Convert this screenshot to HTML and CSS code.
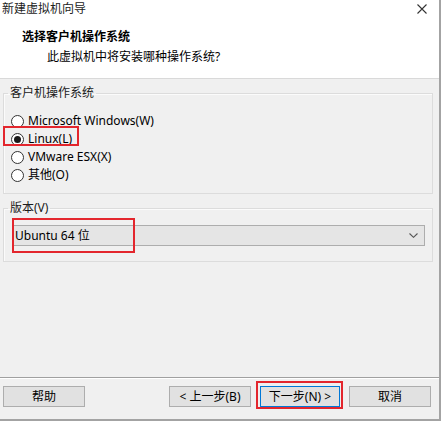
FILE: index.html
```html
<!DOCTYPE html>
<html lang="zh-CN">
<head>
    <meta charset="UTF-8">
    <title>新建虚拟机向导</title>
    <link rel="stylesheet" href="styles.css">
</head>
<body>
<div class="window">
    <div class="head">
        <div class="titlebar">
            <span class="title">新建虚拟机向导</span>
            <svg class="close" width="10" height="10" viewBox="0 0 10 10">
                <path d="M0.5 0.5 L9.5 9.5 M9.5 0.5 L0.5 9.5" stroke="#333" stroke-width="1.1" fill="none"/>
            </svg>
        </div>
        <div class="heading">选择客户机操作系统</div>
        <div class="subheading">此虚拟机中将安装哪种操作系统?</div>
    </div>

    <div class="content">
        <fieldset class="group osGroup">
            <legend>客户机操作系统</legend>
            <div class="radioRow"><span class="radio"></span>Microsoft Windows(W)</div>
            <div class="radioRow">
                <span class="radio checked"></span>Linux(L)
                <span class="mark markLinux"></span>
            </div>
            <div class="radioRow"><span class="radio"></span>VMware ESX(X)</div>
            <div class="radioRow"><span class="radio"></span>其他(O)</div>
        </fieldset>

        <fieldset class="group versionGroup">
            <legend>版本(V)</legend>
            <div class="select">
                <span>Ubuntu 64 位</span>
                <svg class="chevron" width="9" height="5" viewBox="0 0 9 5">
                    <path d="M0.5 0.5 L4.5 4.3 L8.5 0.5" stroke="#555" stroke-width="1.1" fill="none"/>
                </svg>
                <span class="mark markVersion"></span>
            </div>
        </fieldset>
    </div>

    <div class="footer">
        <button class="btn">帮助</button>
        <div class="navButtons">
            <button class="btn">&lt; 上一步(B)</button>
            <button class="btn btnDefault">下一步(N) &gt;<span class="mark markNext"></span></button>
            <button class="btn">取消</button>
        </div>
    </div>
</div>
</body>
</html>
```

FILE: styles.css
```css
html, body {
    margin: 0;
    background: #ffffff;
}

body {
    font-family: "Noto Sans", "Noto Sans CJK SC", sans-serif;
    font-size: 12px;
    color: #000;
}

.window {
    width: 439px;
    height: 419px;
    border-right: 2px solid #a3a3a3;
    border-bottom: 2px solid #a3a3a3;
    background: #f0f0f0;
    display: flex;
    flex-direction: column;
}

/* white header */
.head {
    background: #ffffff;
    height: 78px;
    border-bottom: 1px solid #d9d9d9;
}

.titlebar {
    height: 18px;
    display: flex;
    align-items: center;
    justify-content: space-between;
    padding: 0 12px 0 2px;
}
.title {
    line-height: 16px;
    color: #222;
}
.close {
    display: block;
    margin-top: -1px;
}

.heading {
    margin: 11px 0 0 22px;
    line-height: 16px;
    font-weight: bold;
}
.subheading {
    margin: 4px 0 0 47px;
    line-height: 16px;
}

.content {
    flex: 1;
    padding: 7px 0 0 3px;
}

.group {
    box-sizing: border-box;
    width: 430px;
    margin: 0;
    padding: 0;
    border: 1px solid #dcdcdc;
    box-shadow: inset 1px 1px 0 #fbfbfb;
}
.group legend {
    margin-left: 4px;
    padding: 0 2px;
    line-height: 14px;
    color: #1a1a1a;
}

.osGroup {
    padding: 12px 0 9px 0;
}

.versionGroup {
    margin-top: 7px;
    padding: 10px 7px 15px 8px;
}
.versionGroup legend {
    margin-left: -4px;
}

.radioRow {
    position: relative;
    height: 18px;
    line-height: 18px;
    display: flex;
    align-items: center;
    gap: 4px;
}
.radio {
    width: 11px;
    height: 11px;
    margin-left: 7px;
    border: 1px solid #333;
    border-radius: 50%;
    background: #fff;
    box-sizing: content-box;
    display: flex;
    align-items: center;
    justify-content: center;
}
.radio.checked::after {
    content: "";
    width: 7px;
    height: 7px;
    border-radius: 50%;
    background: #1a1a1a;
}

.select {
    position: relative;
    height: 19px;
    border: 1px solid #adadad;
    background: #e5e5e5;
    display: flex;
    align-items: center;
    justify-content: space-between;
    padding: 0 6px 0 2px;
    line-height: 19px;
}

/* red annotation frames drawn over the dialog */
.mark {
    position: absolute;
    border: 2px solid #e3262d;
    box-sizing: border-box;
    pointer-events: none;
}
.markLinux {
    left: -1px;
    top: -4px;
    width: 76px;
    height: 20px;
}
.markVersion {
    left: -1px;
    top: -8px;
    width: 123px;
    height: 35px;
}
.markNext {
    left: -5px;
    top: -6px;
    width: 87px;
    height: 28px;
}

.footer {
    height: 33px;
    border-top: 1px solid #a0a0a0;
    box-shadow: inset 0 1px 0 #ffffff;
    display: flex;
    justify-content: space-between;
    align-items: flex-start;
    padding: 8px 8px 0 3px;
}

.navButtons {
    display: flex;
    gap: 9px;
}

.btn {
    position: relative;
    width: 82px;
    height: 21px;
    margin: 0;
    padding: 0;
    border: 1px solid #adadad;
    background: #e1e1e1;
    font-family: "Noto Sans", "Noto Sans CJK SC", sans-serif;
    font-size: 12px;
    line-height: 19px;
    color: #000;
}
.btnDefault {
    border: 1px solid #0078d7;
    width: 80px;
}
```
